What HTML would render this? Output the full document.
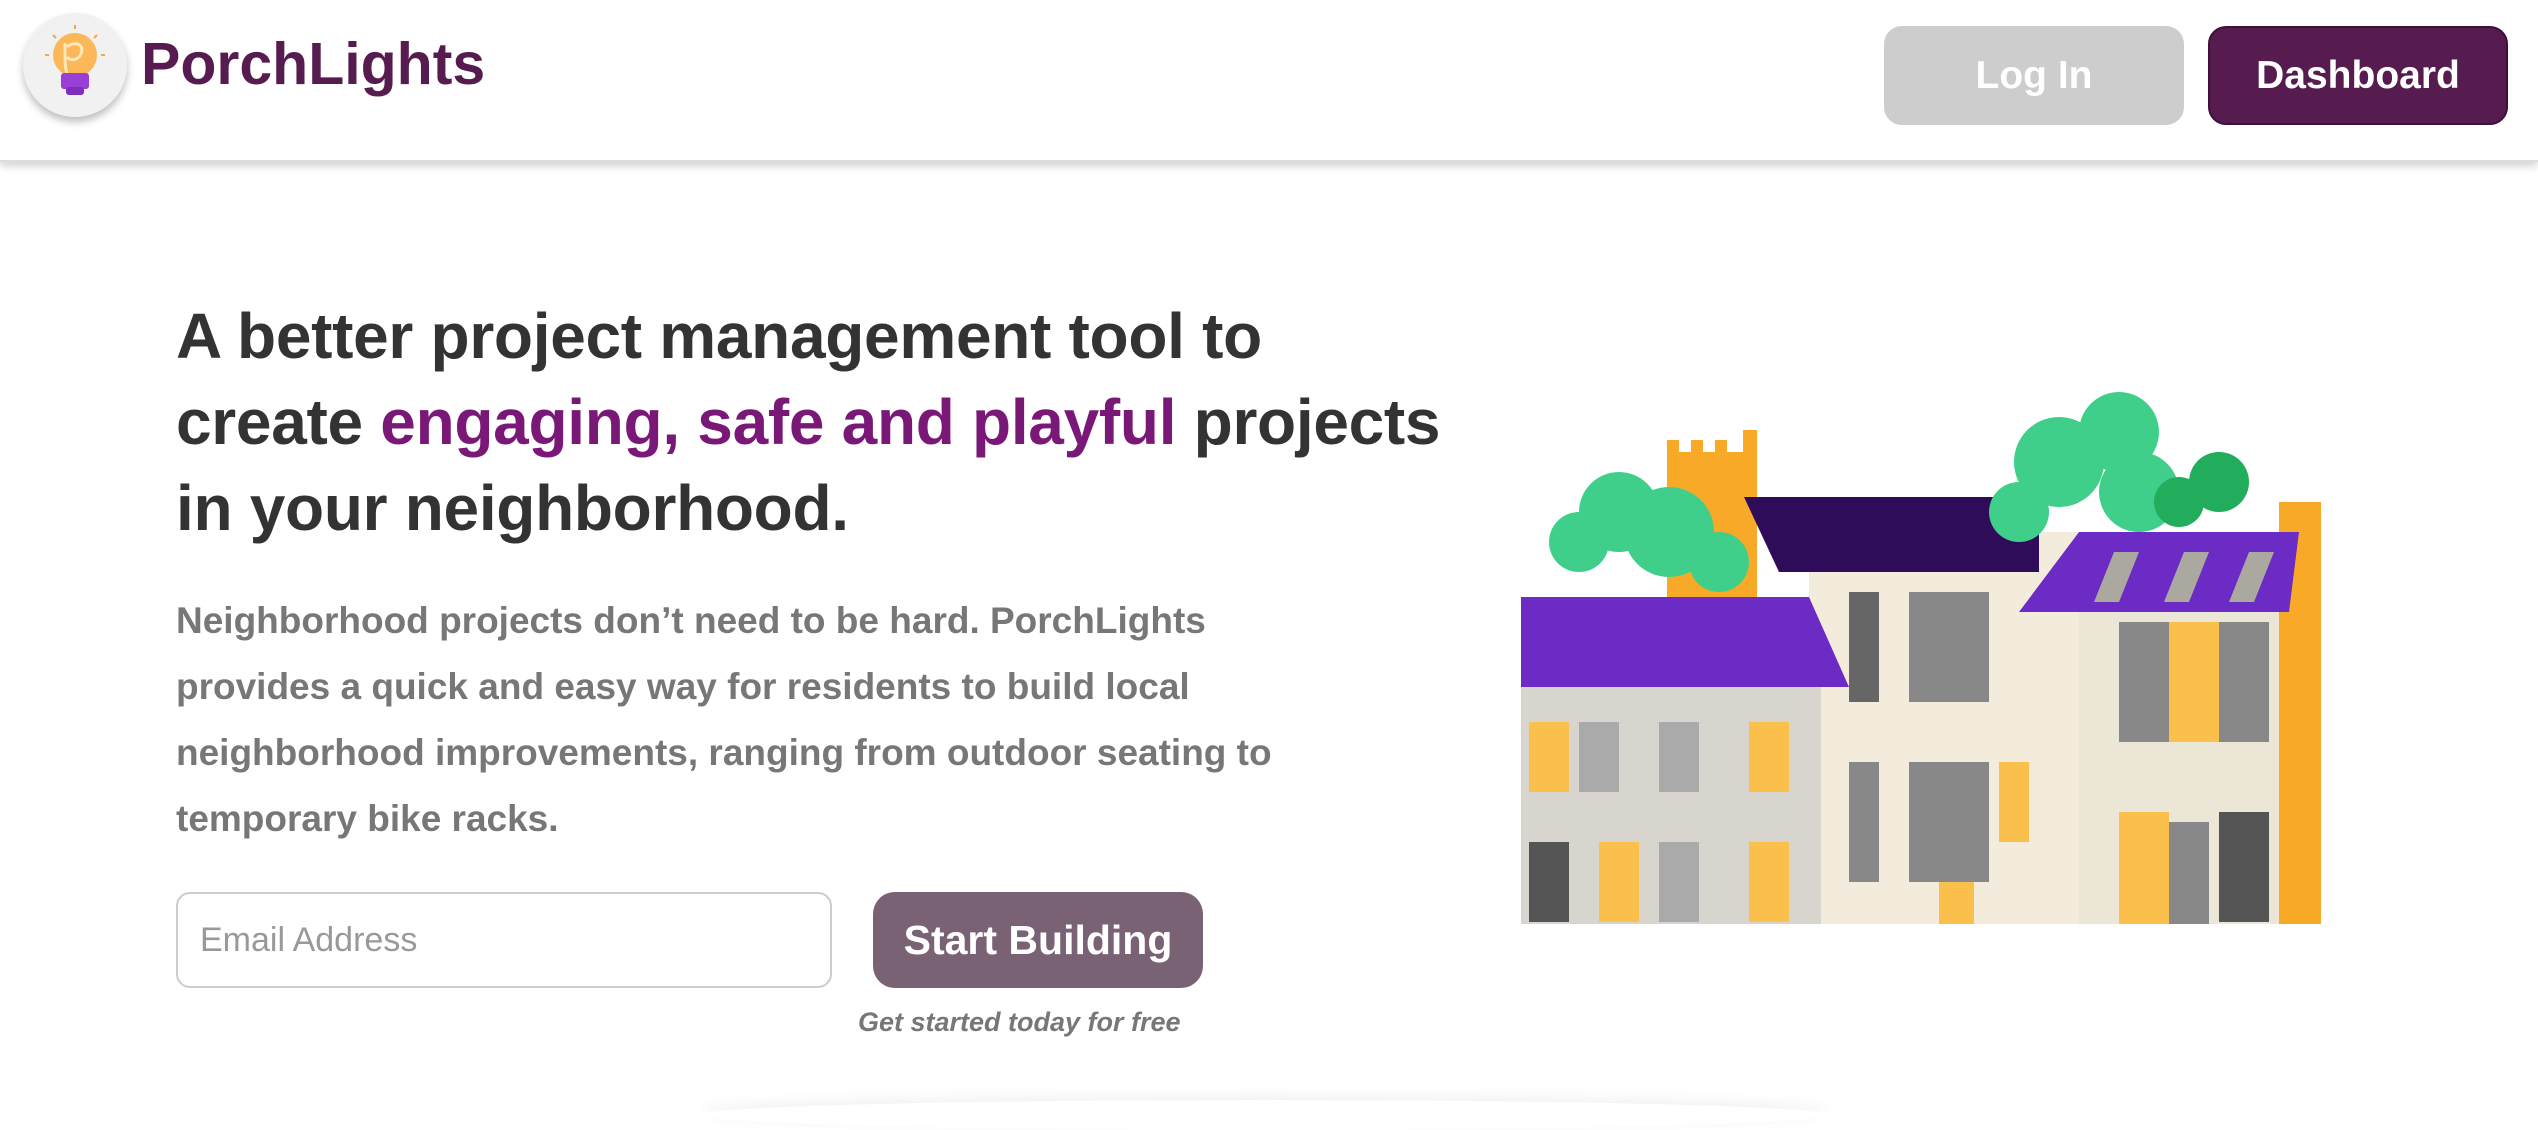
<!DOCTYPE html>
<html><head><meta charset="utf-8"><style>
*{margin:0;padding:0;box-sizing:border-box}
body{width:2538px;height:1120px;overflow:hidden;background:#fff;font-family:"Liberation Sans",sans-serif;position:relative}
.hdr{position:absolute;left:0;top:0;width:2538px;height:162px;background:#fff;box-shadow:0 4px 8px rgba(0,0,0,.18);border-bottom:2px solid #ddd}
.logo{position:absolute;left:23px;top:13px;width:104px;height:104px;border-radius:50%;background:#f1f1f1;box-shadow:0 5px 8px rgba(0,0,0,.25)}
.brand{position:absolute;left:141px;top:30px;font-size:59px;font-weight:bold;color:#561c4f;letter-spacing:0}
.btn{position:absolute;top:26px;height:99px;width:300px;border-radius:18px;color:#fff;font-size:39px;font-weight:bold;display:flex;align-items:center;justify-content:center}
h1{position:absolute;left:176px;top:293px;font-size:64px;line-height:86px;color:#333;font-weight:bold;letter-spacing:-.3px;white-space:nowrap}
h1 span{color:#7a1877}
p.d{position:absolute;left:176px;top:588px;font-size:37px;line-height:66px;color:#777;font-weight:bold;white-space:nowrap;letter-spacing:0}
.inp{position:absolute;left:176px;top:892px;width:656px;height:96px;border:2px solid #ccc;border-radius:14px;font-size:34px;color:#999;padding-left:22px;display:flex;align-items:center}
.sb{position:absolute;left:873px;top:892px;width:330px;height:96px;border-radius:22px;background:#7a6275;color:#fff;font-size:41px;font-weight:bold;display:flex;align-items:center;justify-content:center}
.gs{position:absolute;left:858px;top:1007px;font-size:27px;font-style:italic;font-weight:bold;color:#777}
</style></head><body>
<div class="hdr">
<div class="logo"><svg width="104" height="104" viewBox="0 0 104 104">
<circle cx="52" cy="42" r="22" fill="#fbb858"/><path d="M42 30c0 20 0 25 2 30M44 34c10-8 20 0 12 10-4 4-10 3-12 0" stroke="#fde7b7" stroke-width="3" fill="none"/>
<rect x="38" y="60" width="28" height="16" rx="3" fill="#9a3fd5"/><rect x="43" y="74" width="18" height="8" rx="3" fill="#7e2ebc"/>
<g stroke="#f5a840" stroke-width="2"><line x1="52" y1="12" x2="52" y2="16"/><line x1="30" y1="22" x2="33" y2="25"/><line x1="74" y1="22" x2="71" y2="25"/><line x1="22" y1="42" x2="26" y2="42"/><line x1="78" y1="42" x2="82" y2="42"/></g></svg></div>
<div class="brand">PorchLights</div>
<div class="btn" style="left:1884px;background:#cdcdcd">Log In</div>
<div class="btn" style="left:2208px;background:#561c4f;border:2px solid #3f1039">Dashboard</div>
</div>
<h1>A better project management tool to<br>create <span>engaging, safe and playful</span> projects<br>in your neighborhood.</h1>
<p class="d">Neighborhood projects don’t need to be hard. PorchLights<br>provides a quick and easy way for residents to build local<br>neighborhood improvements, ranging from outdoor seating to<br>temporary bike racks.</p>
<div class="inp">Email Address</div>
<div class="sb">Start Building</div>
<div class="gs">Get started today for free</div>
<div style="position:absolute;left:700px;top:1100px;width:1130px;height:30px;border-radius:50%;box-shadow:0 -4px 14px rgba(0,0,0,.06)"></div>
<svg style="position:absolute;left:1519px;top:392px" width="812" height="532" viewBox="0 0 812 532">
<rect x="148" y="60" width="90" height="220" fill="#f8a928"/>
<rect x="148" y="48" width="12" height="20" fill="#f8a928"/><rect x="172" y="48" width="12" height="20" fill="#f8a928"/><rect x="196" y="48" width="12" height="20" fill="#f8a928"/><rect x="224" y="38" width="14" height="30" fill="#f8a928"/>
<rect x="760" y="110" width="42" height="422" fill="#f8a928"/>
<rect x="290" y="140" width="420" height="392" fill="#f3ecdd"/>
<polygon points="225,105 520,105 520,180 260,180" fill="#2e0c5a"/>
<polygon points="560,140 780,140 770,220 500,220" fill="#6c2bc4"/>
<rect x="560" y="220" width="200" height="312" fill="#ece6d6"/>
<polygon points="2,205 290,205 330,295 2,295" fill="#6c2bc4"/>
<rect x="2" y="295" width="300" height="237" fill="#d8d5cf"/>
<g fill="#888"><rect x="600" y="230" width="50" height="120"/><rect x="700" y="230" width="50" height="120"/><rect x="640" y="430" width="50" height="110"/><rect x="700" y="420" width="50" height="110" fill="#555"/><rect x="330" y="200" width="30" height="110" fill="#666"/><rect x="390" y="200" width="80" height="110"/><rect x="390" y="370" width="80" height="120"/><rect x="330" y="370" width="30" height="120"/><rect x="60" y="330" width="40" height="70" fill="#aaa"/><rect x="140" y="330" width="40" height="70" fill="#aaa"/><rect x="10" y="450" width="40" height="80" fill="#555"/><rect x="140" y="450" width="40" height="80" fill="#aaa"/></g>
<g fill="#fbbf4c"><rect x="10" y="330" width="40" height="70"/><rect x="230" y="330" width="40" height="70"/><rect x="80" y="450" width="40" height="80"/><rect x="230" y="450" width="40" height="80"/><rect x="650" y="230" width="50" height="120"/><rect x="600" y="420" width="50" height="120"/><rect x="480" y="370" width="30" height="80"/><rect x="420" y="490" width="35" height="42"/></g>
<g fill="#3fcf8a"><circle cx="100" cy="120" r="40"/><circle cx="60" cy="150" r="30"/><circle cx="150" cy="140" r="45"/><circle cx="200" cy="170" r="30"/><circle cx="540" cy="70" r="45"/><circle cx="600" cy="40" r="40"/><circle cx="620" cy="100" r="40"/><circle cx="500" cy="120" r="30"/><circle cx="700" cy="90" r="30" fill="#22ad5c"/><circle cx="660" cy="110" r="25" fill="#22ad5c"/></g>
<g fill="#aaa89f"><polygon points="595,160 620,160 600,210 575,210"/><polygon points="665,160 690,160 670,210 645,210"/><polygon points="730,160 755,160 735,210 710,210"/></g>
</svg>
</body></html>
